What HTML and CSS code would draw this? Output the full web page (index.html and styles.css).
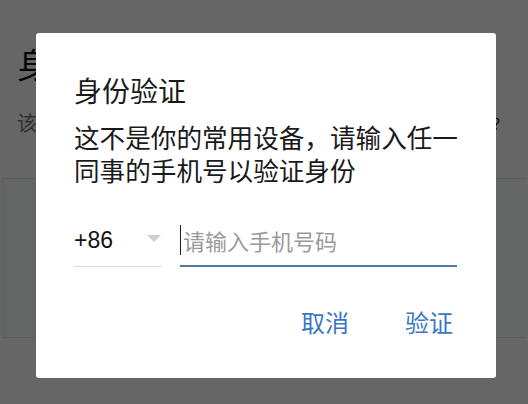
FILE: index.html
```html
<!DOCTYPE html>
<html lang="zh-CN">
<head>
<meta charset="utf-8">
<title>身份验证</title>
<link rel="stylesheet" href="styles.css">
</head>
<body>
<div class="page">
  <h1 class="page-title">身份验证</h1>
  <div class="page-sub"><span>该设备需要验证您的身份</span><span class="page-help">？</span></div>
  <div class="page-card"></div>
</div>
<div class="overlay">
  <div class="dialog">
    <h2 class="dlg-title">身份验证</h2>
    <p class="dlg-text">这不是你的常用设备，请输入任一同事的手机号以验证身份</p>
    <div class="phone-row">
      <div class="country">
        <span class="code">+86</span>
        <span class="caret"></span>
      </div>
      <div class="phone-input">
        <span class="cursor"></span><span class="placeholder">请输入手机号码</span>
      </div>
    </div>
    <div class="actions">
      <button class="btn">取消</button>
      <button class="btn">验证</button>
    </div>
  </div>
</div>
</body>
</html>
```
FILE: styles.css
```css
html, body {
  margin: 0;
  padding: 0;
}
body {
  width: 528px;
  height: 404px;
  overflow: hidden;
  background: #fff;
  font-family: "Noto Sans CJK SC", "Noto Sans", sans-serif;
  position: relative;
}
.page {
  padding: 44px 0 0 17px;
}
.page-title {
  margin: 0;
  font-size: 34px;
  line-height: 40px;
  font-weight: 400;
  color: #111;
}
.page-sub {
  margin-top: 26px;
  display: flex;
  justify-content: space-between;
  font-size: 20px;
  line-height: 26px;
  color: #777;
  padding-right: 20px;
}
.page-help {
  color: #222;
  font-size: 16px;
}
.page-card {
  margin: 42px 2px 0 -15px;
  height: 158px;
  border-top: 1px solid #e6e6e6;
  border-bottom: 1px solid #e6e6e6;
  border-left: 1px solid #eee;
  background: #fbfdfc;
}
.overlay {
  position: absolute;
  inset: 0;
  background: rgba(0, 0, 0, 0.6);
}
.dialog {
  position: absolute;
  left: 36px;
  top: 33px;
  width: 460px;
  height: 345px;
  box-sizing: border-box;
  background: #fff;
  border-radius: 3px;
  padding: 43px 34px 0 38px;
  display: flex;
  flex-direction: column;
}
.dlg-title {
  margin: 0;
  font-size: 28px;
  line-height: 28px;
  font-weight: 400;
  color: #1a1a1a;
}
.dlg-text {
  margin: 17px 0 0;
  font-size: 25.6px;
  line-height: 32.5px;
  color: #1a1a1a;
}
.phone-row {
  margin-top: 32px;
  display: flex;
  align-items: flex-end;
  gap: 18px;
  padding-right: 5px;
}
.country {
  width: 88px;
  height: 48px;
  box-sizing: border-box;
  border-bottom: 1px solid #ddd;
  display: flex;
  align-items: center;
  justify-content: space-between;
  padding-bottom: 4px;
}
.code {
  font-family: "Liberation Sans", Arial, sans-serif;
  font-size: 23px;
  color: #111;
}
.caret {
  width: 0;
  height: 0;
  border-left: 7.5px solid transparent;
  border-right: 7.5px solid transparent;
  border-top: 7px solid #cfcfcf;
  margin-right: 1px;
  margin-bottom: 4px;
}
.phone-input {
  flex: 1;
  height: 49px;
  box-sizing: border-box;
  border-bottom: 2px solid #4f7aa6;
  display: flex;
  align-items: center;
  padding-bottom: 4px;
}
.cursor {
  width: 1px;
  height: 30px;
  background: #222;
  margin-right: 2px;
}
.placeholder {
  font-size: 22px;
  color: #9a9a9a;
}
.actions {
  margin-top: 40px;
  display: flex;
  justify-content: flex-end;
  gap: 56px;
  padding-right: 9px;
}
.btn {
  background: none;
  border: 0;
  padding: 0;
  font-family: "Noto Sans CJK SC", "Noto Sans", sans-serif;
  font-size: 24px;
  line-height: 30px;
  color: #3b77c0;
}
```
